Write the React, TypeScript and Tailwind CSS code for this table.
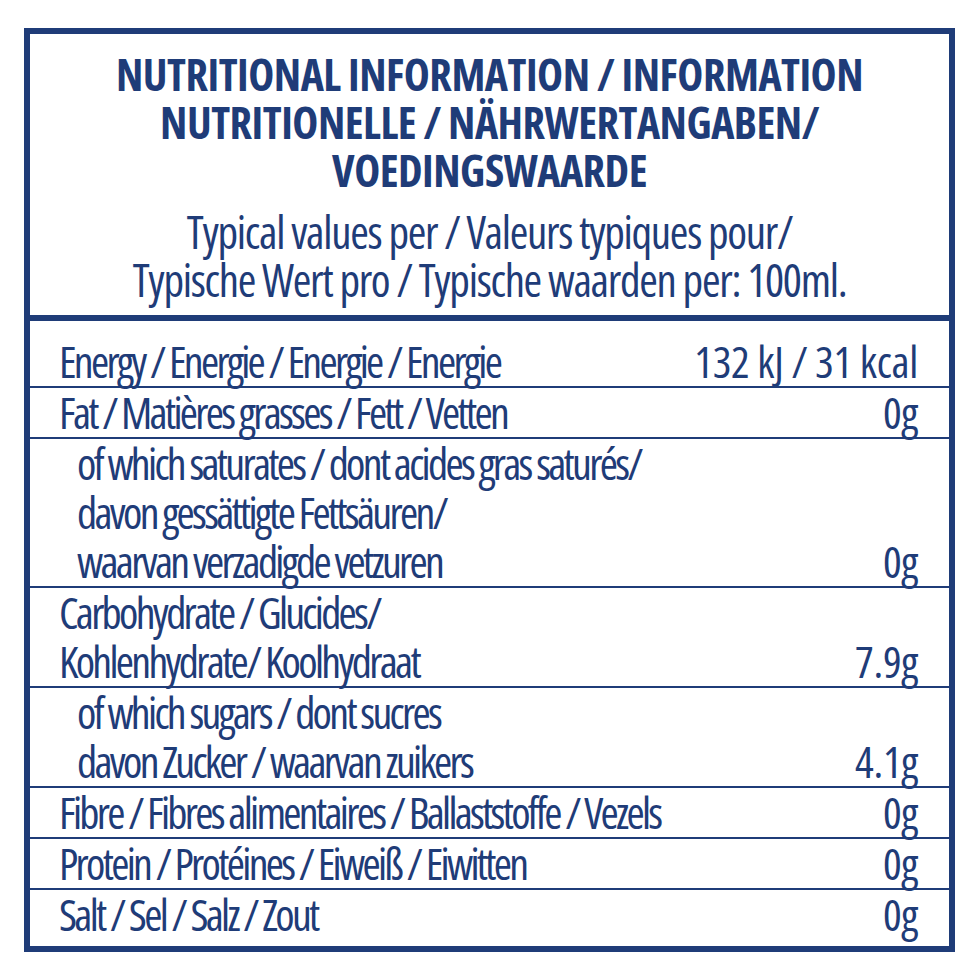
type Row = { lines: string[]; value: string; indent?: boolean };

const rows: Row[] = [
  { lines: ["Fat / Matières grasses / Fett / Vetten"], value: "0g" },
  {
    lines: [
      "of which saturates / dont acides gras saturés/",
      "davon gessättigte Fettsäuren/",
      "waarvan verzadigde vetzuren",
    ],
    value: "0g",
    indent: true,
  },
  { lines: ["Carbohydrate / Glucides/", "Kohlenhydrate/ Koolhydraat"], value: "7.9g" },
  {
    lines: ["of which sugars / dont sucres", "davon Zucker / waarvan zuikers"],
    value: "4.1g",
    indent: true,
  },
  { lines: ["Fibre / Fibres alimentaires / Ballaststoffe / Vezels"], value: "0g" },
  { lines: ["Protein / Protéines / Eiweiß / Eiwitten"], value: "0g" },
];

const font = { fontFamily: '"Open Sans", "Liberation Sans", sans-serif', fontStretch: "75%" } as const;

export default function App() {
  return (
    <div className="w-[980px] h-[980px] bg-white pt-[28px] pl-[24px]" style={font}>
      <div className="w-[931px] h-[924px] border-[6px] border-[#1f3c78] text-[#1f3c78] flex flex-col">
        <div className="pt-[16px] pb-[11px] text-center">
          <div className="text-[44px] leading-[48px] font-bold tracking-[-0.5px]">
            <div>NUTRITIONAL INFORMATION / INFORMATION</div>
            <div>NUTRITIONELLE / NÄHRWERTANGABEN/</div>
            <div>VOEDINGSWAARDE</div>
          </div>
          <div className="mt-[14px] text-[45px] leading-[48px] tracking-[-1.3px]">
            <div>Typical values per / Valeurs typiques pour/</div>
            <div>Typische Wert pro / Typische waarden per: 100ml.</div>
          </div>
        </div>
        <div className="h-[6px] bg-[#1f3c78]" />
        <div className="flex-1 flex flex-col text-[44px] leading-[49px] tracking-[-2.7px]">
          <div className="pt-[16px] pl-[29px] pr-[31px] flex justify-between items-end border-b-2 border-[#1f3c78]">
            <div className="whitespace-nowrap">Energy / Energie / Energie / Energie</div>
            <div className="whitespace-nowrap tracking-[-0.3px]">132 kJ / 31 kcal</div>
          </div>
          {rows.map((r, i) => (
            <div
              key={i}
              className="pl-[29px] pr-[31px] flex justify-between items-end border-b-2 border-[#1f3c78]"
            >
              <div className={r.indent ? "pl-[18px]" : ""}>
                {r.lines.map((l, j) => (
                  <div key={j} className="whitespace-nowrap">{l}</div>
                ))}
              </div>
              <div className="whitespace-nowrap tracking-[-0.3px]">{r.value}</div>
            </div>
          ))}
          <div className="flex-1 pl-[29px] pr-[31px] flex justify-between items-start">
            <div className="whitespace-nowrap">Salt / Sel / Salz / Zout</div>
            <div className="whitespace-nowrap tracking-[-0.3px]">0g</div>
          </div>
        </div>
      </div>
    </div>
  );
}
